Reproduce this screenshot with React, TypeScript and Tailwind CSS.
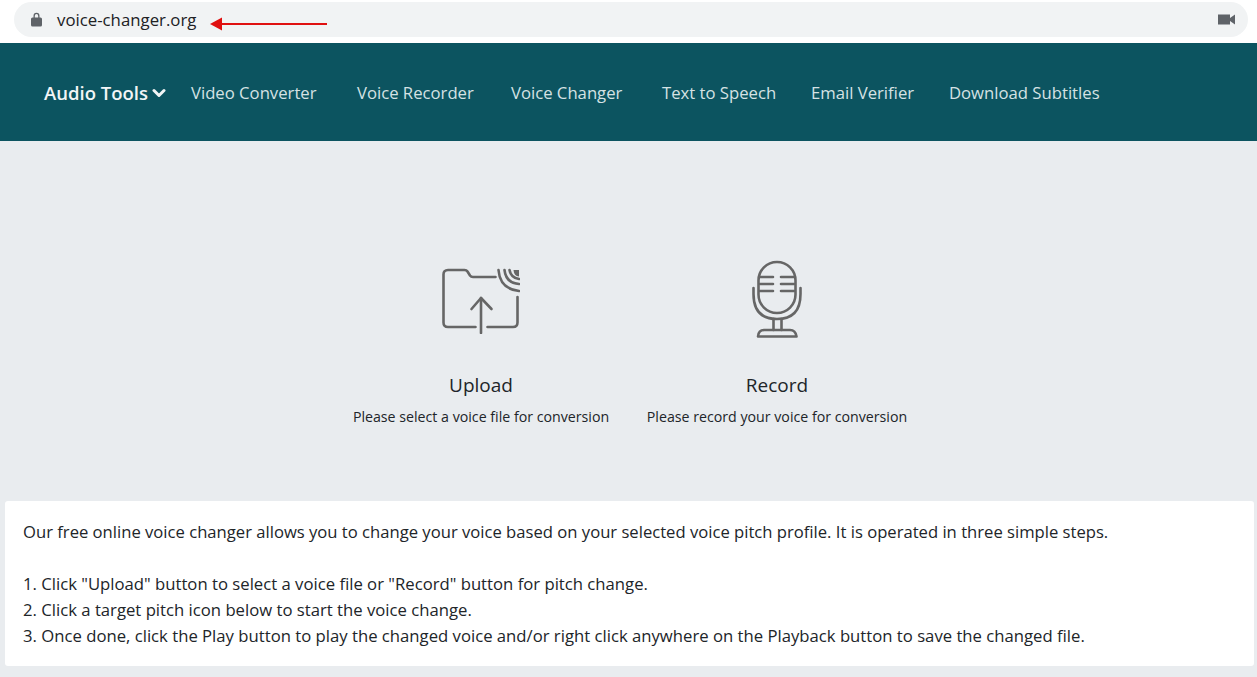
const links = [
  { label: 'Video Converter', width: 'w-[166px]' },
  { label: 'Voice Recorder', width: 'w-[154px]' },
  { label: 'Voice Changer', width: 'w-[151px]' },
  { label: 'Text to Speech', width: 'w-[149px]' },
  { label: 'Email Verifier', width: 'w-[138px]' },
  { label: 'Download Subtitles', width: 'w-[160px]' },
]

function UploadIcon() {
  return (
    <svg width="78" height="70" viewBox="0 0 78 70" fill="none" stroke="#666" strokeWidth="2.6" strokeLinecap="round" strokeLinejoin="round">
      <path d="M53.500 13 H31 Q29 13 28 11.500 L25.500 7.500 Q24.500 6 22.500 6 H6 Q1.500 6 1.500 10.500 V58.500 Q1.500 63 6 63 H33.500" />
      <path d="M45.500 63 H71 Q75.500 63 75.500 58.500 V33" />
      <path d="M39 69 V34" />
      <path d="M29.500 45 L39 34 L49.500 45" />
      <path d="M56.500 6 Q58 25 77 27" />
      <path d="M62.500 6 Q64 19 77 20" />
      <path d="M67.500 6 Q69 14 77 15" />
      <path d="M71.500 6 H77 V12.500 Q72 12 71.500 6 Z" fill="#666" stroke="none" />
    </svg>
  )
}

function MicIcon() {
  return (
    <svg width="50" height="78" viewBox="0 0 50 78" fill="none" stroke="#666" strokeWidth="2.6" strokeLinecap="round" strokeLinejoin="round">
      <rect x="6.500" y="2" width="37" height="51" rx="18.500" />
      <path d="M8 17 H21 M29 17 H42 M8 24 H21 M29 24 H42 M8 31 H21 M29 31 H42" />
      <path d="M1.500 28 V34 Q1.500 59 25 59 Q48.500 59 48.500 34 V28" />
      <path d="M21.500 59 V70 M29.500 59 V70" />
      <path d="M6 76.500 Q6.500 70 12 70 H38 Q43.500 70 44.500 76.500 Z" />
    </svg>
  )
}

function Action({ icon, title, text, width }: { icon: React.ReactNode; title: string; text: string; width: string }) {
  return (
    <div className={`flex flex-col items-center ${width}`}>
      <div className="h-[80px] flex items-center justify-center">{icon}</div>
      <div className="mt-[33px] text-[19px] leading-[26px] text-[#212529]">{title}</div>
      <div className="mt-[8px] text-[14.2px] leading-[22px] text-[#212529] whitespace-nowrap">{text}</div>
    </div>
  )
}

export default function App() {
  return (
    <div className="h-[677px] overflow-hidden bg-[#e9ecef] font-['Open_Sans','Noto_Sans',sans-serif]">
      <div className="h-[43px] bg-white pt-[2px] pl-[14px] pr-[9px]">
        <div className="relative flex h-[35px] items-center rounded-full bg-[#f1f3f4] pl-[17px] pr-[13px]">
          <svg width="11" height="15" viewBox="0 0 11 15" fill="#5f6368">
            <path d="M1.500 5.500 H2.500 V4 Q2.500 0.800 5.500 0.800 Q8.500 0.800 8.500 4 V5.500 H9.500 Q11 5.500 11 7 V13 Q11 14.500 9.500 14.500 H1.500 Q0 14.500 0 13 V7 Q0 5.500 1.500 5.500 Z M3.800 5.500 H7.200 V4 Q7.200 2 5.500 2 Q3.800 2 3.800 4 Z" fillRule="evenodd" />
          </svg>
          <span className="ml-[15px] text-[16.8px] text-[#202124]">voice-changer.org</span>
          <svg className="absolute left-[195px] top-[15px]" width="120" height="14" viewBox="0 0 120 14">
            <path d="M12 7 H118" stroke="#e01010" strokeWidth="2" />
            <path d="M1 7 L13 0.500 V13.500 Z" fill="#e01010" />
          </svg>
          {/* camera icon in the address bar */}
          <svg className="ml-auto" width="17" height="11" viewBox="0 0 17 11" fill="#5f6368">
            <path d="M0 0.500 H12 V4 L17 0.500 V10.500 L12 7 V10.500 H0 Z" />
          </svg>
        </div>
      </div>

      <nav className="flex h-[98px] items-center bg-[#0c5460] pl-[44px] pt-[2px]">
        <span className="text-[18.500px] font-semibold text-[#f2f5f6]">Audio Tools</span>
        <svg className="ml-[4px]" width="14" height="10" viewBox="0 0 14 10" fill="none" stroke="#f2f5f6" strokeWidth="3" strokeLinecap="round" strokeLinejoin="round">
          <path d="M2 2.500 L7 7.500 L12 2.500" />
        </svg>
        <div className="ml-[25px] flex">
          {links.map((l) => (
            <span key={l.label} className={`${l.width} whitespace-nowrap text-[16.7px] text-[#d5e2e4]`}>{l.label}</span>
          ))}
        </div>
      </nav>

      <main className="flex justify-center gap-[38px] pt-[118px] pl-[3px]">
        <Action icon={<UploadIcon />} title="Upload" text="Please select a voice file for conversion" width="w-[256px]" />
        <Action icon={<MicIcon />} title="Record" text="Please record your voice for conversion" width="w-[260px]" />
      </main>

      <section className="ml-[5px] mr-[3px] mt-[73px] h-[165px] rounded-[3px] bg-white pl-[18px] pt-[18px] text-[16.640px] leading-[26px] text-[#212529]">
        <p>Our free online voice changer allows you to change your voice based on your selected voice pitch profile. It is operated in three simple steps.</p>
        <br />
        <div className="text-[16.720px]">
          <p>1. Click "Upload" button to select a voice file or "Record" button for pitch change.</p>
          <p>2. Click a target pitch icon below to start the voice change.</p>
          <p>3. Once done, click the Play button to play the changed voice and/or right click anywhere on the Playback button to save the changed file.</p>
        </div>
      </section>
    </div>
  )
}
